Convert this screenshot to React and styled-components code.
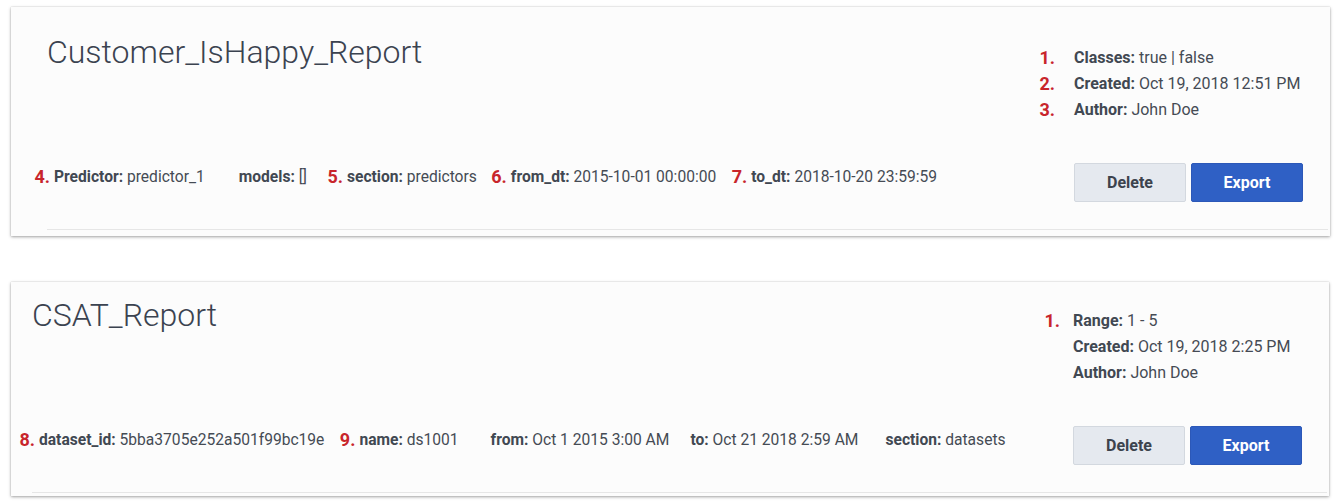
import React from "react";
import styled, { createGlobalStyle } from "styled-components";

const Global = createGlobalStyle`
  html, body { margin: 0; padding: 0; background: #ffffff; }
  body { font-family: Roboto, "Liberation Sans", Arial, sans-serif; color: #3f4651; }
`;

const Page = styled.div`
  display: flex;
  flex-direction: column;
  gap: 46px;
  padding: 7px 12px 7px 11px;
`;

const Card = styled.section`
  background: #fcfcfc;
  box-shadow: 0 1px 3px rgba(0, 0, 0, 0.35), 0 0 1px rgba(0, 0, 0, 0.2);
  padding: ${(p) => p.$pt}px 27px ${(p) => p.$pb}px ${(p) => p.$pl}px;
  margin-right: ${(p) => p.$mr}px;
  display: flex;
  flex-direction: column;
`;

const Body = styled.div`
  display: flex;
  justify-content: space-between;
`;

const Left = styled.div`
  display: flex;
  flex-direction: column;
  justify-content: space-between;
`;

const Title = styled.h2`
  margin: 0;
  font-weight: 300;
  font-size: ${(p) => p.$size}px;
  line-height: 40px;
  color: #3b4350;
`;

const Fields = styled.div`
  display: flex;
  align-items: center;
  height: 39px;
  padding: 0 0 11px 7px;
  box-sizing: border-box;
  font-size: 15.6px;
  line-height: 20px;
  white-space: nowrap;
`;

const Field = styled.span`
  position: relative;
  margin-left: ${(p) => p.$ml || 0}px;
`;

const Label = styled.b`
  font-weight: 700;
  color: #414852;
`;

const Value = styled.span`
  color: #454b54;
`;

const Marker = styled.span`
  position: absolute;
  right: 100%;
  margin-right: ${(p) => p.$gap}px;
  top: 50%;
  transform: translateY(-50%);
  color: #c8252b;
  font-weight: 700;
  font-size: ${(p) => p.$size}px;
  line-height: 20px;
`;

const Right = styled.div`
  width: 229px;
  display: flex;
  flex-direction: column;
`;

const Meta = styled.ul`
  list-style: none;
  margin: 13px 0 0;
  padding: 0;
  font-size: 16px;
  line-height: 26px;
`;

const MetaItem = styled.li`
  position: relative;
  white-space: nowrap;
`;

const Actions = styled.div`
  display: flex;
  gap: 5px;
  margin-top: 40px;
`;

const Button = styled.button`
  width: 112px;
  height: 39px;
  border-radius: 2px;
  font-family: Roboto, "Liberation Sans", Arial, sans-serif;
  font-weight: 700;
  font-size: 16px;
  cursor: pointer;
  border: 1px solid ${(p) => (p.$primary ? "#2c58b8" : "#d3d8df")};
  background: ${(p) => (p.$primary ? "#2f60c5" : "#e5e9ef")};
  color: ${(p) => (p.$primary ? "#ffffff" : "#3c434d")};
`;

const Separator = styled.hr`
  border: 0;
  height: 1px;
  background: #e6e6e6;
  margin: 27px -25px 0 0;
`;

const reports = [
  {
    title: "Customer_IsHappy_Report",
    titleSize: 32,
    pt: 25,
    pl: 36,
    pb: 6,
    mr: 0,
    metaGap: 19,
    meta: [
      { n: "1.", label: "Classes:", value: "true | false" },
      { n: "2.", label: "Created:", value: "Oct 19, 2018 12:51 PM" },
      { n: "3.", label: "Author:", value: "John Doe" },
    ],
    fields: [
      { n: "4.", label: "Predictor:", value: "predictor_1", ml: 0 },
      { label: "models:", value: "[]", ml: 34 },
      { n: "5.", label: "section:", value: "predictors", ml: 40 },
      { n: "6.", label: "from_dt:", value: "2015-10-01 00:00:00", ml: 34 },
      { n: "7.", label: "to_dt:", value: "2018-10-20 23:59:59", ml: 35 },
    ],
  },
  {
    title: "CSAT_Report",
    titleSize: 32,
    pt: 13,
    pl: 21,
    pb: 3,
    mr: 1,
    metaGap: 13,
    meta: [
      { n: "1.", label: "Range:", value: "1 - 5" },
      { label: "Created:", value: "Oct 19, 2018 2:25 PM" },
      { label: "Author:", value: "John Doe" },
    ],
    fields: [
      { n: "8.", label: "dataset_id:", value: "5bba3705e252a501f99bc19e", ml: 0 },
      { n: "9.", label: "name:", value: "ds1001", ml: 35 },
      { label: "from:", value: "Oct 1 2015 3:00 AM", ml: 32 },
      { label: "to:", value: "Oct 21 2018 2:59 AM", ml: 21 },
      { label: "section:", value: "datasets", ml: 27 },
    ],
  },
];

function ReportCard({ r }) {
  return (
    <Card $pt={r.pt} $pl={r.pl} $pb={r.pb} $mr={r.mr}>
      <Body>
        <Left>
          <Title $size={r.titleSize}>{r.title}</Title>
          <Fields>
            {r.fields.map((f) => (
              <Field key={f.label} $ml={f.ml}>
                {f.n && (
                  <Marker $gap={4} $size={18}>
                    {f.n}
                  </Marker>
                )}
                <Label>{f.label}</Label> <Value>{f.value}</Value>
              </Field>
            ))}
          </Fields>
        </Left>
        <Right>
          <Meta>
            {r.meta.map((m) => (
              <MetaItem key={m.label}>
                {m.n && (
                  <Marker $gap={r.metaGap} $size={18}>
                    {m.n}
                  </Marker>
                )}
                <Label>{m.label}</Label> <Value>{m.value}</Value>
              </MetaItem>
            ))}
          </Meta>
          <Actions>
            <Button>Delete</Button>
            <Button $primary>Export</Button>
          </Actions>
        </Right>
      </Body>
      <Separator />
    </Card>
  );
}

export default function App() {
  return (
    <>
      <Global />
      <Page>
        {reports.map((r) => (
          <ReportCard key={r.title} r={r} />
        ))}
      </Page>
    </>
  );
}
